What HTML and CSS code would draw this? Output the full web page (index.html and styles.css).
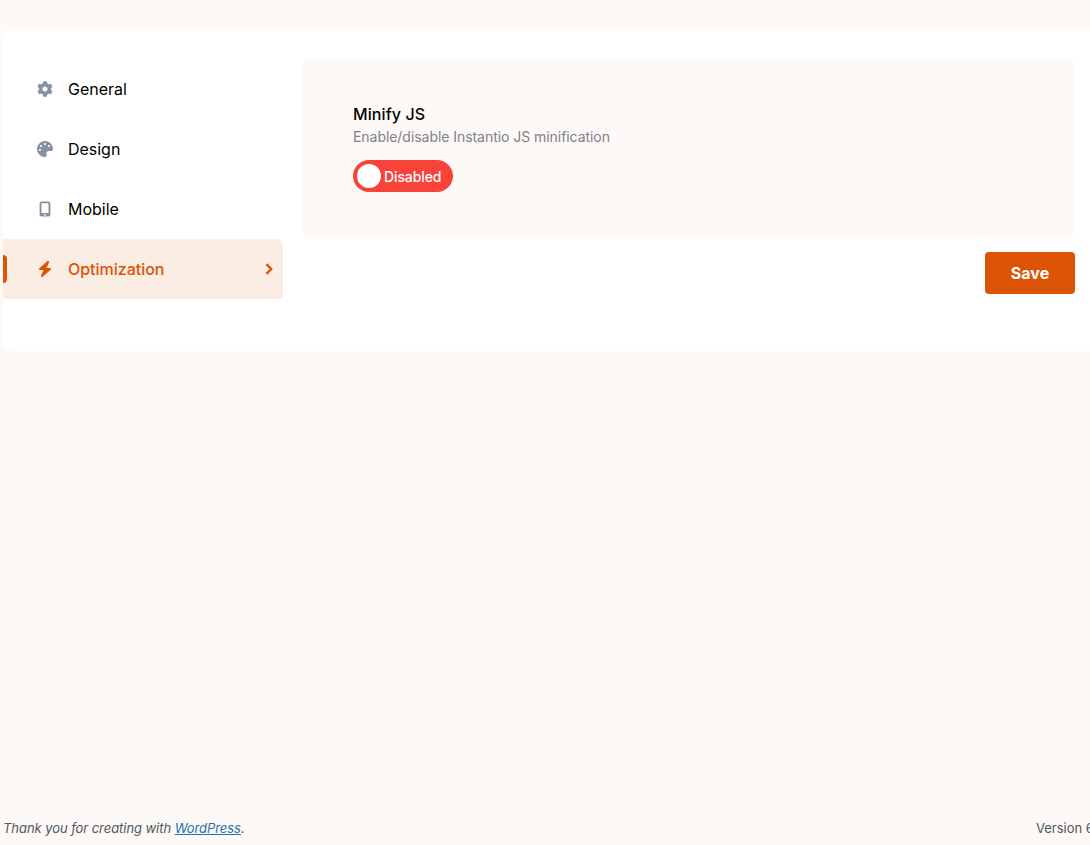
FILE: index.html
```html
<!DOCTYPE html>
<html lang="en">
<head>
<meta charset="utf-8">
<title>Optimization</title>
<link rel="stylesheet" href="styles.css">
</head>
<body>
<div class="page">
  <div class="card">
    <nav class="sidebar">
      <a class="nav-item">
        <svg class="nav-icon" viewBox="0 0 512 512"><path d="M487.4 315.7l-42.6-24.6c4.3-23.2 4.3-47 0-70.2l42.6-24.6c4.9-2.8 7.1-8.6 5.5-14-11.1-35.6-30-67.8-54.7-94.6-3.8-4.1-10-5.1-14.8-2.3L380.8 110c-17.9-15.4-38.5-27.3-60.8-35.1V25.8c0-5.6-3.9-10.5-9.4-11.7-36.7-8.2-74.3-7.8-109.2 0-5.5 1.2-9.4 6.1-9.4 11.7V75c-22.2 7.9-42.8 19.8-60.8 35.1L88.7 85.5c-4.9-2.8-11-1.9-14.8 2.3-24.7 26.7-43.6 58.9-54.7 94.6-1.7 5.4.6 11.2 5.5 14L67.3 221c-4.3 23.2-4.3 47 0 70.2l-42.6 24.6c-4.9 2.8-7.1 8.6-5.5 14 11.1 35.6 30 67.8 54.7 94.6 3.8 4.1 10 5.1 14.8 2.3l42.6-24.6c17.9 15.4 38.5 27.3 60.8 35.1v49.2c0 5.6 3.9 10.5 9.4 11.7 36.7 8.2 74.3 7.8 109.2 0 5.5-1.2 9.4-6.1 9.4-11.7v-49.2c22.2-7.9 42.8-19.8 60.8-35.1l42.6 24.6c4.9 2.8 11 1.9 14.8-2.3 24.7-26.7 43.6-58.9 54.7-94.6 1.5-5.5-.7-11.3-5.6-14.1zM256 336c-44.1 0-80-35.9-80-80s35.9-80 80-80 80 35.9 80 80-35.9 80-80 80z"/></svg>
        <span>General</span>
      </a>
      <a class="nav-item">
        <svg class="nav-icon" viewBox="0 0 512 512"><path d="M204.3 5C104.9 24.4 24.8 104.3 5.2 203.4c-37 187 131.7 326.4 258.8 306.7 41.2-6.4 61.4-54.6 42.5-91.7-23.1-45.4 9.9-98.4 60.9-98.4h79.7c35.8 0 64.8-29.6 64.9-65.3C511.5 97.1 368.1-26.9 204.3 5zM96 320c-17.7 0-32-14.3-32-32s14.3-32 32-32 32 14.3 32 32-14.3 32-32 32zm32-128c-17.7 0-32-14.3-32-32s14.3-32 32-32 32 14.3 32 32-14.3 32-32 32zm128-64c-17.7 0-32-14.3-32-32s14.3-32 32-32 32 14.3 32 32-14.3 32-32 32zm128 64c-17.7 0-32-14.3-32-32s14.3-32 32-32 32 14.3 32 32-14.3 32-32 32z"/></svg>
        <span>Design</span>
      </a>
      <a class="nav-item">
        <svg class="nav-icon" viewBox="0 0 16 16"><path fill-rule="evenodd" d="M4.6 0.5h6.8c1.2 0 2 .8 2 2v11c0 1.2-.8 2-2 2H4.6c-1.2 0-2-.8-2-2v-11c0-1.200.8-2 2-2zM4.500 2.200v9.900h7V2.200zM8 12.900a.9.9 0 1 0 0 1.800.9.9 0 0 0 0-1.800z"/></svg>
        <span>Mobile</span>
      </a>
      <a class="nav-item nav-item-active">
        <svg class="nav-icon" viewBox="0 0 448 512"><path d="M349.400 44.600c5.900-13.700 1.500-29.700-10.600-38.500s-28.600-8-39.900 1.800l-256 224c-10 8.800-13.600 22.900-8.900 35.300S50.700 288 64 288H175.500L98.600 467.400c-5.900 13.700-1.500 29.700 10.600 38.500s28.600 8 39.900-1.800l256-224c10-8.800 13.600-22.900 8.900-35.300s-16.600-20.700-30-20.700H272.500L349.400 44.600z"/></svg>
        <span class="nav-label">Optimization</span>
        <svg class="nav-chevron" viewBox="0 0 8 12"><path d="M1.500 1.200L6.200 6l-4.700 4.800"/></svg>
      </a>
    </nav>
    <main class="content">
      <section class="panel">
        <h2 class="panel-title">Minify JS</h2>
        <p class="panel-desc">Enable/disable Instantio JS minification</p>
        <div class="toggle">
          <span class="toggle-knob"></span>
          <span class="toggle-text">Disabled</span>
        </div>
      </section>
      <div class="actions">
        <button class="save" type="button">Save</button>
      </div>
    </main>
  </div>
  <footer class="footer">
    <span class="thanks">Thank you for creating with <a class="wp-link">WordPress</a>.</span>
    <span class="version">Version 6.5.3</span>
  </footer>
</div>
</body>
</html>
```
FILE: styles.css
```css
html, body {
  margin: 0;
  padding: 0;
  height: 100%;
  overflow: hidden;
}
body {
  background: #fdf9f6;
  font-family: Inter, "Liberation Sans", sans-serif;
  color: #000;
}
.page {
  box-sizing: border-box;
  width: 1130px;
  height: 845px;
  padding: 29px 0 0 3px;
  display: flex;
  flex-direction: column;
}
.card {
  width: 1112px;
  height: 322px;
  box-sizing: border-box;
  background: #fff;
  border-radius: 8px;
  padding: 30px 0 0;
  display: flex;
  gap: 20px;
}
.sidebar {
  width: 280px;
  flex: none;
  display: flex;
  flex-direction: column;
}
.nav-item {
  position: relative;
  height: 60px;
  box-sizing: border-box;
  padding-left: 34px;
  display: flex;
  align-items: center;
  gap: 15px;
  font-size: 16px;
  font-weight: 400;
  letter-spacing: -0.02px;
  color: #000;
}
.nav-icon {
  width: 16px;
  height: 16px;
  flex: none;
  fill: #8592a6;
}
.nav-item-active {
  background: #fbede4;
  color: #dc5305;
  font-weight: 500;
  border-radius: 0 6px 0 0;
}
.nav-item-active::before {
  content: "";
  position: absolute;
  left: 0;
  top: 16px;
  width: 4px;
  height: 28px;
  background: #dc5305;
  border-radius: 0 4px 4px 0;
}
.nav-item-active .nav-icon {
  fill: #dc5305;
}
.nav-label {
  flex: 1;
}
.nav-chevron {
  width: 8px;
  height: 12px;
  margin-right: 10px;
  fill: none;
  stroke: #dc5305;
  stroke-width: 2.400;
}
.content {
  width: 772px;
  flex: none;
}
.panel {
  box-sizing: border-box;
  height: 178px;
  background: #fdf9f6;
  border-radius: 6px;
  padding: 45px 50px 0;
}
.panel-title {
  margin: 0;
  font-size: 16px;
  line-height: 20px;
  font-weight: 500;
  letter-spacing: 0.1px;
  color: #000;
}
.panel-desc {
  margin: 3px 0 0;
  font-size: 14px;
  line-height: 20px;
  letter-spacing: -0.05px;
  color: #80808a;
}
.toggle {
  margin-top: 13px;
  width: 100px;
  height: 32px;
  box-sizing: border-box;
  padding: 0 12px 0 4px;
  border-radius: 16px;
  background: #f7433a;
  display: flex;
  align-items: center;
  gap: 3px;
  color: #fff;
  font-size: 14px;
  font-weight: 500;
  letter-spacing: -0.1px;
}
.toggle-knob {
  width: 24px;
  height: 24px;
  flex: none;
  border-radius: 50%;
  background: #fff;
}
.actions {
  margin-top: 15px;
  display: flex;
  justify-content: flex-end;
}
.save {
  width: 90px;
  height: 42px;
  border: 0;
  border-radius: 4px;
  background: #dc5305;
  color: #fff;
  font-family: inherit;
  font-size: 16px;
  font-weight: 700;
}
.footer {
  margin-top: auto;
  width: 1113px;
  height: 35px;
  display: flex;
  justify-content: space-between;
  font-family: Inter, "Liberation Sans", sans-serif;
  font-size: 13px;
  line-height: 36px;
  color: #50575e;
}
.thanks {
  font-style: italic;
  letter-spacing: -0.06px;
}
.wp-link {
  color: #2271b1;
  text-decoration: underline;
}
```
